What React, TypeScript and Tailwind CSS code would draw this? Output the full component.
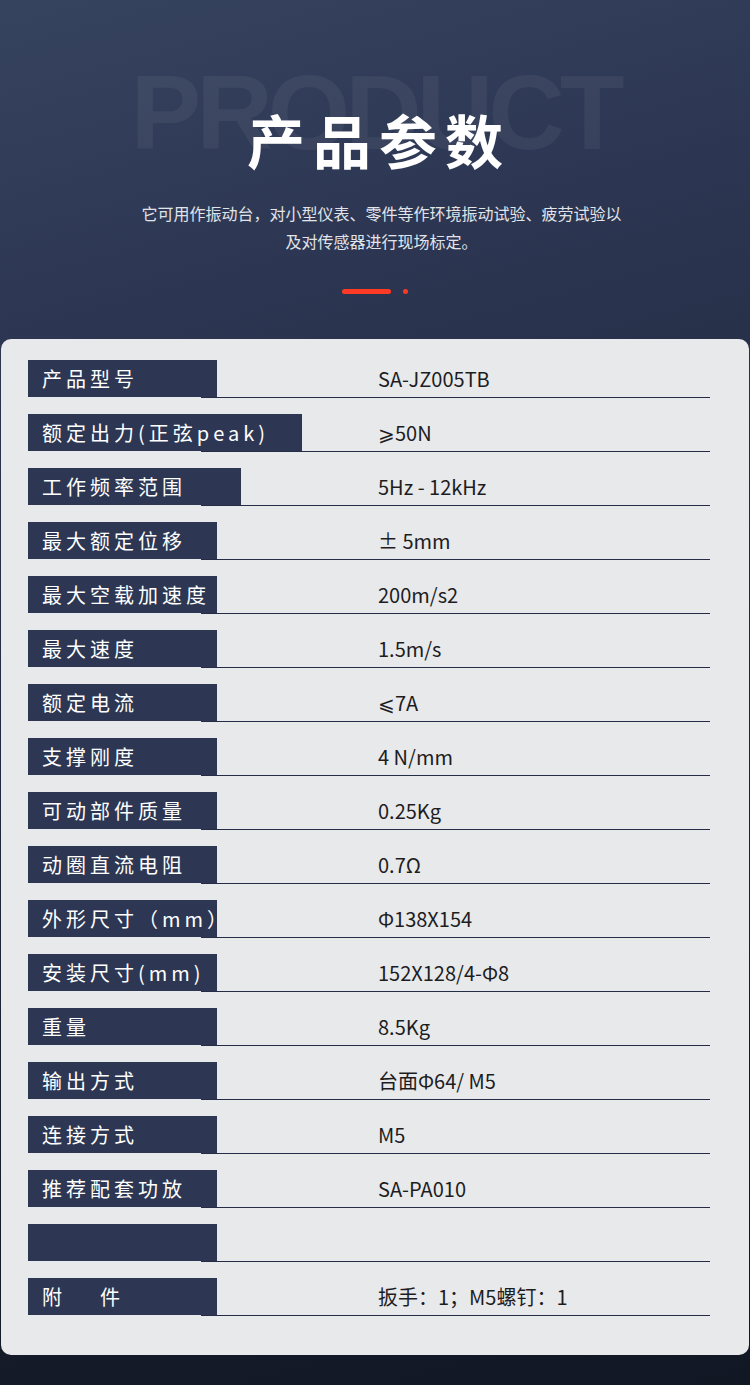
import React from "react";

type Spec = {
    label: string;
    value: string;
    width: number;
};

const specs: Spec[] = [
    { label: "产品型号", value: "SA-JZ005TB", width: 189 },
    { label: "额定出力(正弦peak)", value: "⩾50N", width: 274 },
    { label: "工作频率范围", value: "5Hz - 12kHz", width: 213 },
    { label: "最大额定位移", value: "± 5mm", width: 189 },
    { label: "最大空载加速度", value: "200m/s2", width: 189 },
    { label: "最大速度", value: "1.5m/s", width: 189 },
    { label: "额定电流", value: "⩽7A", width: 189 },
    { label: "支撑刚度", value: "4 N/mm", width: 189 },
    { label: "可动部件质量", value: "0.25Kg", width: 189 },
    { label: "动圈直流电阻", value: "0.7Ω", width: 189 },
    { label: "外形尺寸（mm）", value: "Φ138X154", width: 189 },
    { label: "安装尺寸(mm)", value: "152X128/4-Φ8", width: 189 },
    { label: "重量", value: "8.5Kg", width: 189 },
    { label: "输出方式", value: "台面Φ64/ M5", width: 189 },
    { label: "连接方式", value: "M5", width: 189 },
    { label: "推荐配套功放", value: "SA-PA010", width: 189 },
    { label: "", value: "", width: 189 },
    { label: "附    件", value: "扳手：1；M5螺钉：1", width: 189 },
];

const cjk = "font-['Noto_Sans_CJK_SC','Noto_Sans',sans-serif]";

function SpecRow({ spec }: { spec: Spec }) {
    return (
        <div className="flex flex-col">
            <div className="grid h-[37px] grid-cols-[350px_1fr] items-center">
                <div
                    className="flex h-[37px] items-center bg-[#2d3753] pl-[14px]"
                    style={{ width: spec.width }}
                >
                    <span className="whitespace-pre text-[20px] font-normal leading-none tracking-[4px] text-white">
                        {spec.label}
                    </span>
                </div>
                <span className="whitespace-nowrap text-[20px] leading-none text-[#1d1d1f]">
                    {spec.value}
                </span>
            </div>
            <div className="ml-[173px] h-px w-[509px] bg-[#242d45]" />
        </div>
    );
}

export default function App() {
    return (
        <div
            className={`${cjk} min-h-[1385px] w-[750px] bg-[linear-gradient(165deg,#36435f_0%,#2c3652_22%,#222a3f_50%,#161c2b_80%,#121724_100%)]`}
        >
            <header className="relative flex h-[339px] flex-col items-center pt-[107px]">
                <div className="absolute left-0 right-0 top-[59px] text-center font-['Liberation_Sans',Arial,sans-serif] text-[106px] font-bold leading-none tracking-[-5px] text-white/[0.055]">
                    PRODUCT
                </div>
                <h1 className="relative pl-[8px] text-[58px] font-bold leading-[64px] tracking-[8px] text-white">
                    产品参数
                </h1>
                <p className="relative mt-[28px] pl-[13px] text-center text-[16px] leading-[28px] text-[#e1e4ea]">
                    它可用作振动台，对小型仪表、零件等作环境振动试验、疲劳试验以
                    <br />
                    及对传感器进行现场标定。
                </p>
                <div className="mt-[34px] flex items-center gap-[12px]">
                    <span className="h-[5px] w-[49px] rounded-full bg-[#ff3a25]" />
                    <span className="h-[5px] w-[5px] rounded-full bg-[#ff3a25]" />
                </div>
            </header>

            <main className="mx-[1px] rounded-[10px] bg-[#e8e9eb] pb-[39px] pl-[27px] pt-[21px]">
                <div className="flex flex-col gap-4">
                    {specs.map((spec, idx) => (
                        <SpecRow key={idx} spec={spec} />
                    ))}
                </div>
            </main>
        </div>
    );
}
